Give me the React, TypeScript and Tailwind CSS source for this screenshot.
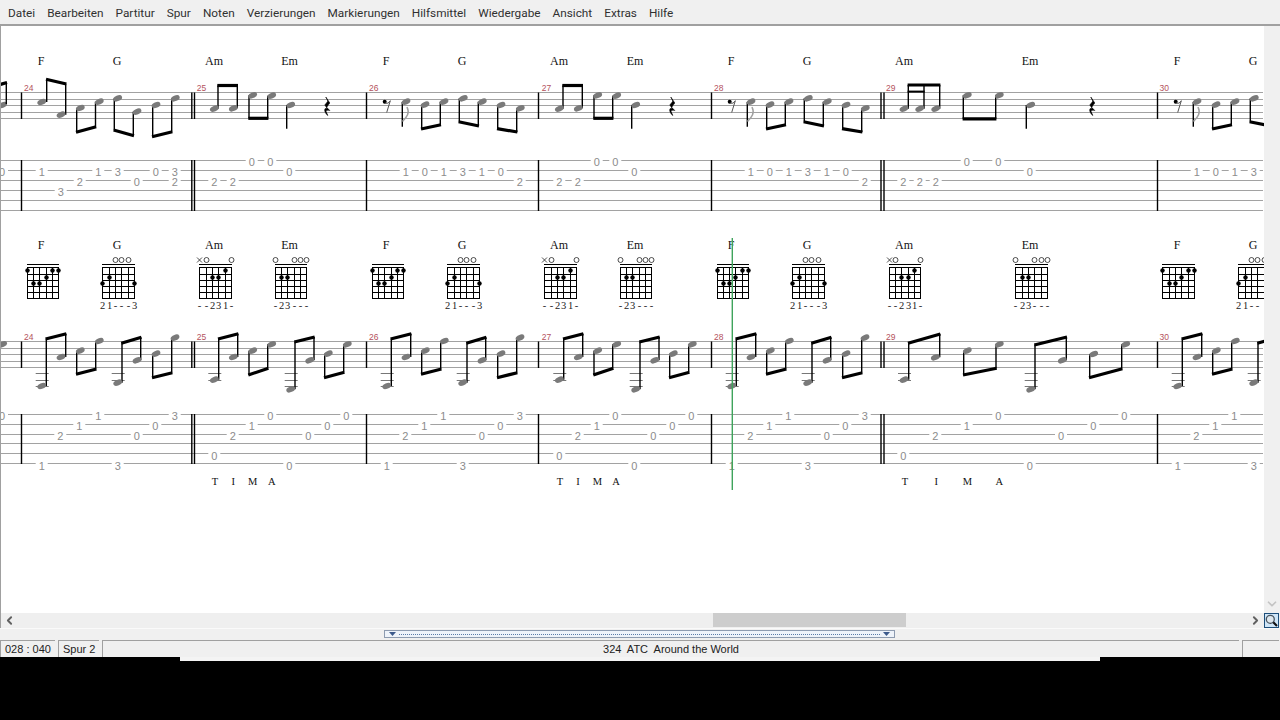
import { ChevronDown, ChevronLeft, ChevronRight } from "lucide-react";

const menuItems = [
  "Datei",
  "Bearbeiten",
  "Partitur",
  "Spur",
  "Noten",
  "Verzierungen",
  "Markierungen",
  "Hilfsmittel",
  "Wiedergabe",
  "Ansicht",
  "Extras",
  "Hilfe",
];

type Note = [number, number, number, number]; // head x, head y, stem x, stem end y
type Digit = [number, number, string]; // x, line y, fret

const sheetWidth = 1263;

// ---- top system ----
const topStaff = [92.5, 99.5, 105.5, 112.5, 118.5];
const topTab = [160.5, 170.5, 180.5, 190.5, 200.5, 210.5];

const beamsA: Note[][] = [
  [[80.3, 108, 76.7, 132.3], [99.3, 101.7, 95.5, 126.7]],
  [[117.7, 98.3, 114.3, 130], [137, 111.7, 133.3, 135.7]],
  [[156, 105, 152.7, 136.7], [175.3, 98.3, 171.7, 131.7]],
];

const beams24: Note[][] = [
  [[41.7, 102, 46.7, 79.3], [61, 114.7, 65.7, 84]],
  ...beamsA,
];

const beams25: Note[][] = [
  [[214.3, 108.7, 218, 85.5], [233.3, 108.3, 237.3, 85.5]],
  [[252.7, 95.3, 249, 118.3], [271.7, 95.7, 267.7, 118.3]],
];

const beams26: Note[][] = [
  [[425, 104.7, 421.7, 129], [444, 101.7, 440.3, 124.7]],
  [[463.3, 98.3, 459.3, 121.7], [482.3, 101.7, 478.3, 126]],
  [[501, 105, 497.7, 128.7], [520.3, 108.3, 516.7, 132]],
];

const beams29: Note[][] = [
  [[904, 108.7, 908.3, 85], [919.7, 108.7, 924, 85], [935.7, 108.7, 939.7, 85]],
  [[967.3, 95.3, 963.3, 118.8], [999.3, 95.3, 995.7, 118.8]],
];

const digits24Top: Digit[] = [
  [2, 170.5, "0"], [41.7, 170.5, "1"], [60.7, 190.5, "3"], [79.7, 180.5, "2"], [98.3, 170.5, "1"],
  [117.7, 170.5, "3"], [136.7, 180.5, "0"], [155.7, 170.5, "0"], [174.7, 170.5, "3"], [174.7, 180.5, "2"],
];
const digits25Top: Digit[] = [
  [214.3, 180.5, "2"], [232.7, 180.5, "2"], [251.7, 160.5, "0"], [270.3, 160.5, "0"], [289.3, 170.5, "0"],
];
const digits26Top: Digit[] = [
  [405.7, 170.5, "1"], [424.7, 170.5, "0"], [443.7, 170.5, "1"], [462.7, 170.5, "3"],
  [481.7, 170.5, "1"], [500.7, 170.5, "0"], [519.7, 180.5, "2"],
];
const digits29Top: Digit[] = [
  [903.3, 180.5, "2"], [919.7, 180.5, "2"], [935.7, 180.5, "2"],
  [966.7, 160.5, "0"], [998.3, 160.5, "0"], [1029.7, 170.5, "0"],
];

// ---- bottom system ----
const lowStaff = [341.5, 348.5, 354.5, 361.5, 367.5];
const lowTab = [414.5, 424.5, 434.5, 443.5, 453.5, 463.5];

const beamsLow24: Note[][] = [
  [[41.7, 386, 46.3, 339], [61, 357, 65.7, 333.7]],
  [[80.3, 350.7, 76.7, 374.3], [99.3, 341, 95.7, 369]],
  [[117.7, 382.7, 122, 343.3], [137, 360.3, 140.7, 337.3]],
  [[156, 353.7, 152.7, 377.7], [175, 337.7, 171.7, 372.7]],
];
const beamsLow25: Note[][] = [
  [[214.3, 379.7, 218.7, 339], [233.3, 357, 237.7, 333.7]],
  [[252.7, 350.7, 249, 375], [271.7, 344.3, 267.7, 368.3]],
  [[290.7, 389.3, 295, 342], [309.7, 360.3, 314, 337]],
  [[328.3, 353.7, 324.7, 377.7], [347.3, 344.3, 343.7, 372.3]],
];
const beamsLow29: Note[][] = [
  [[904, 379.7, 908.7, 343.3], [935.3, 357.3, 939.7, 334]],
  [[967.3, 350.7, 963.7, 375], [999.3, 344.3, 996, 368.3]],
  [[1030.7, 389.3, 1035, 345], [1062.3, 360.3, 1066.3, 337]],
  [[1093.7, 354, 1089.7, 377.7], [1125.7, 344.3, 1121.7, 368.8]],
];

// [x, how many ledger lines]
const ledgers24: [number, number][] = [[41.7, 3], [117.7, 2]];
const ledgers25: [number, number][] = [[214.3, 2], [290.7, 3]];
const ledgers29: [number, number][] = [[904, 2], [1030.7, 3]];

const digitsLow24: Digit[] = [
  [41.7, 464, "1"], [60.3, 434.5, "2"], [79.3, 424.5, "1"], [98.3, 414.5, "1"],
  [117.7, 464, "3"], [136.7, 434.5, "0"], [155.3, 424.5, "0"], [174.7, 414.5, "3"],
];
const digitsLow25: Digit[] = [
  [214.3, 454, "0"], [232.7, 434.5, "2"], [251.7, 424.5, "1"], [270.3, 414.5, "0"],
  [289.3, 464, "0"], [308.3, 434.5, "0"], [327.3, 424.5, "0"], [346.3, 414.5, "0"],
];
const digitsLow29: Digit[] = [
  [903.3, 454, "0"], [935.3, 434.5, "2"], [966.7, 424.5, "1"], [998.3, 414.5, "0"],
  [1029.7, 464, "0"], [1061, 434.5, "0"], [1093.3, 424.5, "0"], [1124.3, 414.5, "0"],
];

const barLines = [21.5, 366.5, 538.5, 711.5, 1157.5];
const doubleBars = [[191.8, 194.5], [881, 884]];
const barNumbers: [number, string][] = [
  [24, "24"], [196.7, "25"], [369, "26"], [541.7, "27"], [714, "28"], [886, "29"], [1159.5, "30"],
];

const chordNames: [number, string][] = [
  [41, "F"], [117, "G"], [214, "Am"], [289.5, "Em"], [386, "F"], [462, "G"], [559, "Am"],
  [635, "Em"], [731, "F"], [807, "G"], [904, "Am"], [1030, "Em"], [1177, "F"], [1253, "G"],
];

type Shape = {
  open: string; // per string: x, o or blank
  dots: [number, number][]; // string, fret
  fingers: string;
};

const shapes: Record<string, Shape> = {
  F: { open: "      ", dots: [[0, 1], [1, 3], [2, 3], [3, 2], [4, 1], [5, 1]], fingers: "" },
  G: { open: "  ooo ", dots: [[0, 3], [1, 2], [5, 3]], fingers: "21---3" },
  Am: { open: "xo   o", dots: [[2, 2], [3, 2], [4, 1]], fingers: "--231-" },
  Em: { open: "o  ooo", dots: [[1, 2], [2, 2]], fingers: "-23---" },
};

const chordBoxes: [number, string][] = [
  [26.7, "F"], [102.3, "G"], [199.3, "Am"], [274.7, "Em"], [371.7, "F"], [447.3, "G"], [544.3, "Am"],
  [619.7, "Em"], [716.5, "F"], [792.3, "G"], [888.7, "Am"], [1015.3, "Em"], [1162.3, "F"], [1238.3, "G"],
];

const tima: [number, string][] = [
  [215, "T"], [233.3, "I"], [252.7, "M"], [271.7, "A"],
  [560, "T"], [578, "I"], [597.3, "M"], [616, "A"],
  [905, "T"], [936.3, "I"], [967.3, "M"], [999.3, "A"],
];

function NoteHead({ x, y }: { x: number; y: number }) {
  return (
    <ellipse cx={x} cy={y} rx={4.6} ry={2.8} fill="#7a7a7a" transform={`rotate(-24 ${x} ${y})`} />
  );
}

function BeamGroup({ notes, dx = 0 }: { notes: Note[]; dx?: number }) {
  const first = notes[0];
  const last = notes[notes.length - 1];
  return (
    <g>
      {notes.map(([x, y, sx, end]) => (
        <g key={x}>
          <line x1={sx + dx} x2={sx + dx} y1={y} y2={end} stroke="#000" strokeWidth={1.4} />
          <NoteHead x={x + dx} y={y} />
        </g>
      ))}
      <line
        x1={first[2] + dx - 0.7}
        y1={first[3]}
        x2={last[2] + dx + 0.7}
        y2={last[3]}
        stroke="#000"
        strokeWidth={3.2}
      />
    </g>
  );
}

function QuarterRest({ x }: { x: number }) {
  return (
    <path
      transform={`translate(${x} 97)`}
      d="M-1.5 0 L2.5 6 C1 8 0 9 -0.5 10.5 L2.5 13.5 C0 13 -2 13.5 -1 15 L0.5 18.5 C-2 16.5 -3.5 13 -2 11.5 L0 11.5 L-2.5 8 C-1 6 0 5 0.5 4 Z"
      fill="#000"
      stroke="#000"
      strokeWidth={0.6}
    />
  );
}

// quarter with grey flag after an eighth rest, start of measures 26, 28, 30
function RestPickup({ dx }: { dx: number }) {
  return (
    <g transform={`translate(${dx} 0)`}>
      <circle cx={384.7} cy={101.7} r={2} fill="#000" />
      <path d="M385 103 C387 104 389 103 390.3 100.7 L386.7 112.5" fill="none" stroke="#555" strokeWidth={1} />
      <line x1={402.3} x2={402.3} y1={102} y2={126.7} stroke="#000" strokeWidth={1.4} />
      <path d="M402.5 121.5 C407 117 410 113 407 107" fill="none" stroke="#a0a0a0" strokeWidth={1.5} />
      <NoteHead x={406} y={101.7} />
    </g>
  );
}

function Digits({ items, dx = 0 }: { items: Digit[]; dx?: number }) {
  // anything past the sheet edge is not drawn at all
  const visible = items.filter(([x]) => x + dx < sheetWidth - 3);
  return (
    <g>
      {visible.map(([x, line, fret]) => (
        <g key={`${x}-${line}`}>
          <rect x={x + dx - 6} y={line - 4} width={12} height={9} fill="#fff" />
          <text
            x={x + dx}
            y={line + 5.5}
            textAnchor="middle"
            className="fill-[#8c8c8c] font-['Liberation_Sans',sans-serif] text-[11px]"
          >
            {fret}
          </text>
        </g>
      ))}
    </g>
  );
}

function Ledgers({ items, dx = 0 }: { items: [number, number][]; dx?: number }) {
  return (
    <g>
      {items.flatMap(([x, n]) =>
        [373.5, 380.5, 386.5].slice(0, n).map((y) => (
          <line key={`${x}-${y}`} x1={x + dx - 6} x2={x + dx + 7} y1={y} y2={y} stroke="#777" strokeWidth={1} />
        ))
      )}
    </g>
  );
}

function ChordBox({ x, name }: { x: number; name: string }) {
  const shape = shapes[name];
  const stringX = (s: number) => Math.round(x + s * 6.33) + 0.5;
  const fretY = (f: number) => Math.round(267.4 + f * 6.2) + 0.5;
  const left = stringX(0) - 0.5;
  const right = stringX(5) + 0.5;
  return (
    <g>
      <line x1={left} x2={right} y1={264.5} y2={264.5} stroke="#000" strokeWidth={1} />
      {[0, 1, 2, 3, 4, 5].map((s) => (
        <line key={s} x1={stringX(s)} x2={stringX(s)} y1={fretY(0)} y2={fretY(5)} stroke="#000" strokeWidth={1} />
      ))}
      {[0, 1, 2, 3, 4, 5].map((f) => (
        <line key={f} x1={left} x2={right} y1={fretY(f)} y2={fretY(f)} stroke="#000" strokeWidth={1} />
      ))}
      {shape.dots.map(([s, f]) => (
        <circle key={s} cx={stringX(s)} cy={fretY(f - 1) + 3} r={2.2} fill="#000" />
      ))}
      {shape.open.split("").map((mark, s) =>
        mark === "o" ? (
          <circle key={s} cx={stringX(s)} cy={260} r={2.5} fill="none" stroke="#222" strokeWidth={0.8} />
        ) : mark === "x" ? (
          <path
            key={s}
            d={`M${stringX(s) - 2.5} 257.5 l5 5 m0 -5 l-5 5`}
            stroke="#222"
            strokeWidth={0.8}
            fill="none"
          />
        ) : null
      )}
      {shape.fingers.split("").map((ch, s) =>
        stringX(s) < sheetWidth - 3 ? (
          <text
            key={s}
            x={stringX(s)}
            y={309}
            textAnchor="middle"
            className="fill-[#222] font-['Liberation_Serif',serif] text-[10.5px]"
          >
            {ch}
          </text>
        ) : null
      )}
    </g>
  );
}

function Score() {
  return (
    <svg width={1263} height={587} viewBox="1 26 1263 587" className="block bg-white">
      {[...topStaff, ...lowStaff].map((y) => (
        <line key={y} x1={0} x2={sheetWidth} y1={y} y2={y} stroke="#a2a2a2" strokeWidth={1} />
      ))}
      {[...topTab, ...lowTab].map((y) => (
        <line key={y} x1={0} x2={sheetWidth} y1={y} y2={y} stroke="#a2a2a2" strokeWidth={1} />
      ))}

      {[
        [92.5, 119],
        [160, 211],
        [341.5, 368],
        [414, 464],
      ].map(([a, b]) => (
        <g key={a}>
          {barLines.map((x) => (
            <line key={x} x1={x} x2={x} y1={a} y2={b} stroke="#000" strokeWidth={1.4} />
          ))}
          {doubleBars.flat().map((x) => (
            <line key={x} x1={x} x2={x} y1={a} y2={b} stroke="#000" strokeWidth={1.4} />
          ))}
        </g>
      ))}

      {barNumbers.map(([x, label]) =>
        [91, 340].map((y) => (
          <text
            key={y}
            x={x}
            y={y}
            className="fill-[#b4525c] font-['Liberation_Sans',sans-serif] text-[8.5px]"
          >
            {label}
          </text>
        ))
      )}

      {chordNames.map(([x, name]) =>
        [65, 249].map((y) => (
          <text
            key={y}
            x={x}
            y={y}
            textAnchor="middle"
            className="fill-[#111] font-['Liberation_Serif',serif] text-[12px]"
          >
            {name}
          </text>
        ))
      )}

      {/* top staff */}
      <NoteHead x={2.7} y={105} />
      <line x1={6.3} x2={6.3} y1={83} y2={104} stroke="#000" strokeWidth={1.4} />
      <line x1={0} x2={7} y1={84.5} y2={82.5} stroke="#000" strokeWidth={3.2} />
      {beams24.map((n) => <BeamGroup key={n[0][0]} notes={n} />)}
      {[0, 345].map((dx) => (
        <g key={dx}>
          {beams25.map((n) => <BeamGroup key={n[0][0]} notes={n} dx={dx} />)}
          <line x1={286.7 + dx} x2={286.7 + dx} y1={105} y2={128.7} stroke="#000" strokeWidth={1.4} />
          <NoteHead x={290.7 + dx} y={105} />
          <QuarterRest x={327.3 + dx} />
        </g>
      ))}
      {[0, 345, 791].map((dx) => (
        <g key={dx}>
          <RestPickup dx={dx} />
          {beams26.map((n) => <BeamGroup key={n[0][0]} notes={n} dx={dx} />)}
        </g>
      ))}
      {beams29.map((n) => <BeamGroup key={n[0][0]} notes={n} />)}
      <line x1={907.6} x2={924.7} y1={91.6} y2={91.6} stroke="#000" strokeWidth={2} />
      <line x1={1026.3} x2={1026.3} y1={105} y2={128.7} stroke="#000" strokeWidth={1.4} />
      <NoteHead x={1030.7} y={105} />
      <QuarterRest x={1092.3} />

      {/* top tab */}
      <Digits items={digits24Top} />
      {[0, 345].map((dx) => <Digits key={dx} items={digits25Top} dx={dx} />)}
      {[0, 345, 791].map((dx) => <Digits key={dx} items={digits26Top} dx={dx} />)}
      <Digits items={digits29Top} />

      {/* chord boxes */}
      {chordBoxes.map(([x, name]) => <ChordBox key={x} x={x} name={name} />)}

      {/* bottom staff */}
      <NoteHead x={2.7} y={344.3} />
      {[0, 345, 690, 1136].map((dx) => (
        <g key={dx}>
          <Ledgers items={ledgers24} dx={dx} />
          {beamsLow24.map((n) => <BeamGroup key={n[0][0]} notes={n} dx={dx} />)}
          <Digits items={digitsLow24} dx={dx} />
        </g>
      ))}
      {[0, 345].map((dx) => (
        <g key={dx}>
          <Ledgers items={ledgers25} dx={dx} />
          {beamsLow25.map((n) => <BeamGroup key={n[0][0]} notes={n} dx={dx} />)}
          <Digits items={digitsLow25} dx={dx} />
        </g>
      ))}
      <Ledgers items={ledgers29} />
      {beamsLow29.map((n) => <BeamGroup key={n[0][0]} notes={n} />)}
      <Digits items={digitsLow29} />
      <Digits items={[[2, 414.5, "0"]]} />

      {tima.map(([x, ch]) => (
        <text
          key={x}
          x={x}
          y={485}
          textAnchor="middle"
          className="fill-[#111] font-['Liberation_Serif',serif] text-[10.5px]"
        >
          {ch}
        </text>
      ))}

      {/* playback cursor */}
      <line x1={732.3} x2={732.3} y1={238} y2={490} stroke="#3fa45c" strokeWidth={1.4} />
    </svg>
  );
}

function TrackMarker() {
  return (
    <svg width={7} height={4} viewBox="0 0 7 4" className="shrink-0">
      <path d="M0 0 H7 L3.5 4 Z" fill="#3c5a8c" />
    </svg>
  );
}

export default function App() {
  return (
    <div className="flex h-[720px] w-[1280px] flex-col overflow-hidden bg-black font-['Liberation_Sans',sans-serif]">
      <div className="flex h-[26px] shrink-0 items-center gap-[12px] border-b-2 border-[#a0a0a0] bg-[#f0f0f0] pl-[8px] pt-[4px] font-['Roboto',sans-serif] text-[11.8px] text-[#303030]">
        {menuItems.map((item) => (
          <span key={item}>{item}</span>
        ))}
      </div>

      <div className="flex h-[587px] shrink-0 border-l border-[#a0a0a0] bg-white">
        <Score />
        <div className="flex flex-1 flex-col items-center justify-end bg-[#f0f0f0] pb-[2px]">
          <ChevronDown size={14} strokeWidth={3} className="text-[#c4c4c4]" />
        </div>
      </div>

      <div className="flex h-[15px] shrink-0 items-center border-l border-[#a0a0a0] bg-[#efefef]">
        <ChevronLeft size={13} strokeWidth={3.5} className="ml-[2px] text-[#606060]" />
        <div className="ml-[697px] h-[14px] w-[193px] self-start bg-[#cdcdcd]" />
        <div className="flex-1" />
        <ChevronRight size={13} strokeWidth={3.5} className="mr-[2px] text-[#606060]" />
        <div className="mr-[1px] flex h-[15px] w-[15px] items-center justify-center border border-[#1d4e7a] bg-[#cfe6f8]">
          <svg width={13} height={13} viewBox="0 0 13 13">
            <circle cx={5.3} cy={5.3} r={4} fill="#dfe8ee" stroke="#4a5560" strokeWidth={1.3} />
            <line x1={8.3} y1={8.3} x2={12} y2={12} stroke="#111" strokeWidth={2.2} />
          </svg>
        </div>
      </div>

      <div className="h-[12px] shrink-0 border-t border-[#fafafa] bg-[#f0f0f0] pl-[384px] pt-[1px]">
        <div className="flex h-[8px] w-[511px] items-center gap-[3px] border border-[#8d9bb0] bg-[#eef3fa] px-[4px]">
          <TrackMarker />
          <div className="flex-1 border-t border-dotted border-[#5a7ba8]" />
          <TrackMarker />
        </div>
      </div>

      <div className="flex h-[17px] shrink-0 whitespace-nowrap bg-[#f0f0f0] text-[11px] leading-[17px] text-[#222]">
        <div className="w-[55px] border-l border-t border-[#a0a0a0] pl-[4px]">028 : 040</div>
        <div className="ml-[3px] w-[41px] border-l border-t border-[#a0a0a0] pl-[4px]">Spur 2</div>
        <div className="ml-[3px] w-[1137px] border-l border-t border-[#a0a0a0] text-center">
          324&nbsp; ATC&nbsp; Around the World
        </div>
        <div className="ml-[3px] w-[37px] border-l border-t border-[#a0a0a0]" />
      </div>

      <div className="ml-[180px] h-[4px] w-[920px] shrink-0 bg-[#f4f4f4]" />
    </div>
  );
}
